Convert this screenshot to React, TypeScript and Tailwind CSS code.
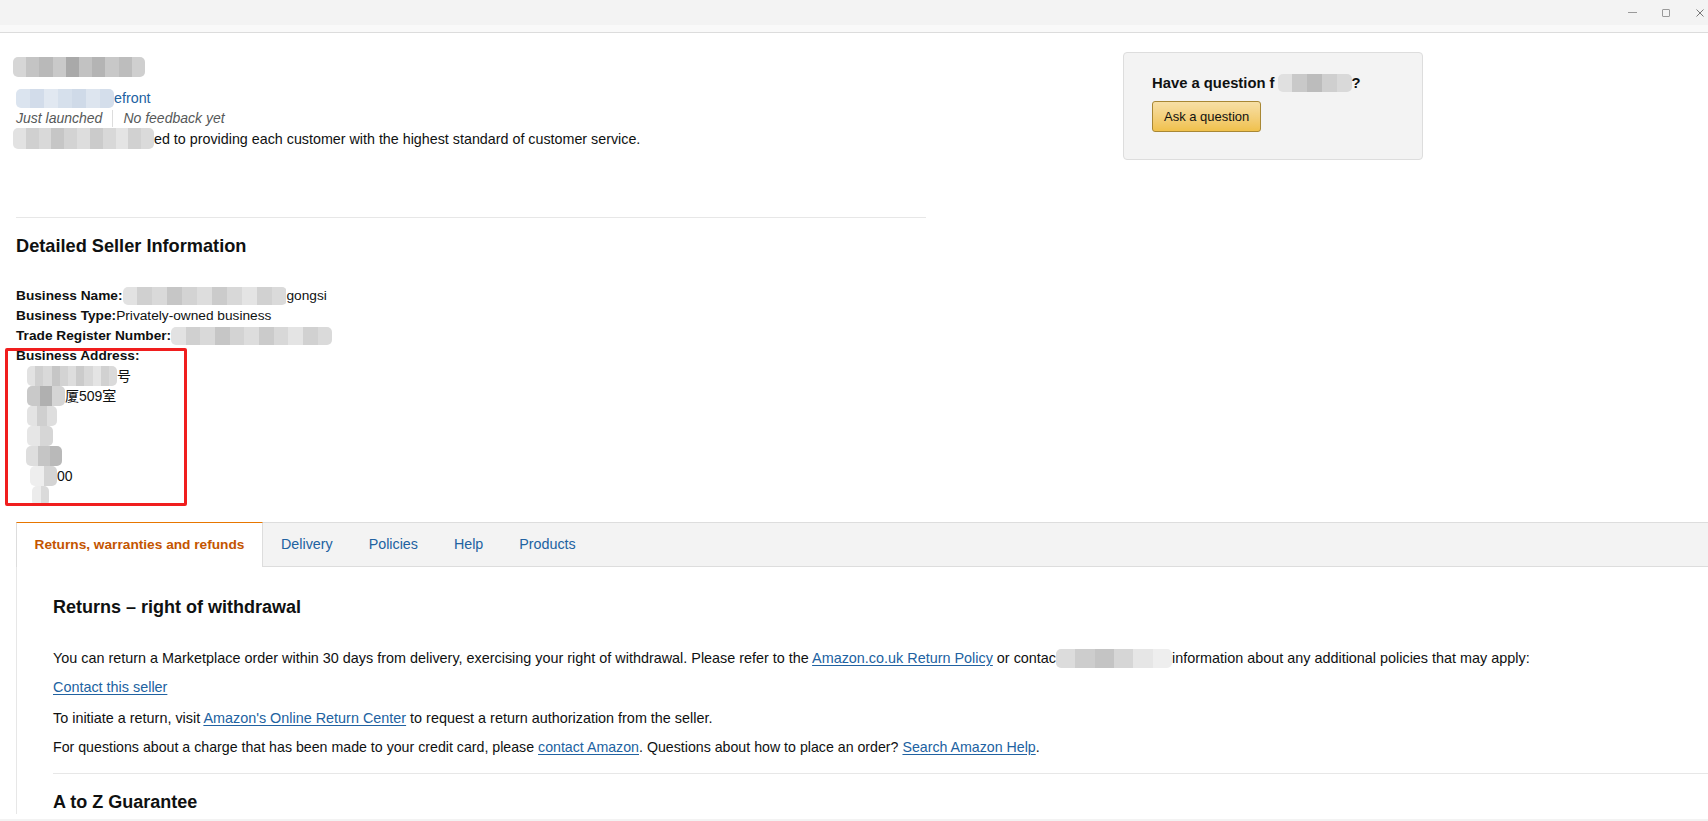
import React from 'react'

// blurred (pixelated) patches used where the screenshot is redacted
function Mosaic({ tones, className = '' }: { tones: string[]; className?: string }) {
  return (
    <span className={`inline-flex shrink-0 overflow-hidden rounded-[5px] blur-[0.6px] align-middle ${className}`}>
      {tones.map((t, i) => (
        <span key={i} className="h-full flex-1" style={{ backgroundColor: t }} />
      ))}
    </span>
  )
}

const grayA = ['#d6d6d6', '#c4c4c4', '#b9b9b9', '#c9c9c9', '#a9a9a9', '#c2c2c2', '#b4b4b4', '#c8c8c8', '#bdbdbd', '#cfcfcf']
const grayB = ['#e2e2e2', '#d0d0d0', '#d9d9d9', '#c6c6c6', '#d3d3d3', '#dddddd', '#cbcbcb', '#d8d8d8', '#e4e4e4', '#d1d1d1', '#dadada']
const blueA = ['#dbe4ef', '#d2dcea', '#e1e8f1', '#d6e0ec', '#cfdae8', '#dde5ef', '#d4deeb']

function WindowControls() {
  return (
    <div className="flex items-center pr-[4px]">
      <span className="w-[9px] h-px bg-[#9a9a9a]" />
      <span className="ml-[25px] w-[8px] h-[8px] border border-[#9a9a9a] rounded-[1px]" />
      <svg className="ml-[26px]" width="8" height="8" viewBox="0 0 8 8">
        <path d="M0.5 0.5 L7.5 7.5 M7.5 0.5 L0.5 7.5" stroke="#777" strokeWidth="1" />
      </svg>
    </div>
  )
}

function A({ children }: { children: React.ReactNode }) {
  return <a className="text-[#2162a1] underline underline-offset-[2px] decoration-[#2162a1]">{children}</a>
}

export default function App() {
  const tabs = ['Delivery', 'Policies', 'Help', 'Products']

  return (
    <div className="h-[821px] w-full overflow-hidden bg-white flex flex-col font-['Liberation_Sans','Noto_Sans_CJK_SC',Arial,sans-serif] text-[#0f1111]">
      {/* window chrome */}
      <div className="h-[25px] shrink-0 bg-[#f3f3f3] flex justify-end items-center">
        <WindowControls />
      </div>
      <div className="h-[8px] shrink-0 bg-[#f9f9f9] border-b border-[#dcdcdc]" />

      <div className="flex-1 overflow-hidden pl-[16px]">
        <div className="flex">
          {/* Left column */}
          <div className="w-[910px] shrink-0">
            <Mosaic tones={grayA} className="mt-[24px] ml-[-3px] w-[132px] h-[20px]" />

            <div className="mt-[11px] flex items-center text-[14.3px] leading-[20px]">
              <Mosaic tones={blueA} className="w-[98px] h-[19px]" />
              <span className="text-[#2162a1]">efront</span>
            </div>

            <div className="flex items-center italic text-[14px] leading-[20px] text-[#565959]">
              Just launched
              <span className="mx-[10px] w-px h-[17px] bg-[#dddddd]" />
              No feedback yet
            </div>

            <div className="flex items-center text-[14.3px] leading-[20px]">
              <Mosaic tones={grayB} className="ml-[-3px] w-[141px] h-[21px]" />
              <span>ed to providing each customer with the highest standard of customer service.</span>
            </div>

            <div className="mt-[68px] h-px bg-[#e7e7e7]" />

            <h2 className="mt-[16px] text-[18.2px] leading-[24px] font-bold">Detailed Seller Information</h2>

            <div className="mt-[28px] text-[13.7px] leading-[20px]">
              <div className="flex items-center">
                <b>Business Name:</b>
                <Mosaic tones={grayB} className="w-[164px] h-[18px]" />
                <span>gongsi</span>
              </div>
              <div>
                <b>Business Type:</b>Privately-owned business
              </div>
              <div className="flex items-center">
                <b>Trade Register Number:</b>
                <Mosaic tones={grayB} className="w-[161px] h-[18px]" />
              </div>

              <div className="relative">
                <b>Business Address:</b>
                <div className="pl-[11px] text-[14px]">
                  <div className="flex items-center h-[20px]">
                    <Mosaic tones={grayB} className="w-[90px] h-[20px]" />
                    <span>号</span>
                  </div>
                  <div className="flex items-center h-[20px]">
                    <Mosaic tones={['#c9c9c9', '#b0b0b0', '#d5d5d5']} className="w-[38px] h-[20px] rounded-[2px]" />
                    <span>厦509室</span>
                  </div>
                  <div className="flex items-center h-[20px]">
                    <Mosaic tones={['#e3e3e3', '#cfcfcf', '#dedede']} className="w-[30px] h-[20px] rounded-[2px]" />
                  </div>
                  <div className="flex items-center h-[20px]">
                    <Mosaic tones={['#e6e6e6', '#d6d6d6']} className="w-[26px] h-[20px] rounded-[2px]" />
                  </div>
                  <div className="flex items-center h-[20px]">
                    <Mosaic tones={['#dedede', '#c5c5c5', '#b9b9b9']} className="ml-[-1px] w-[36px] h-[20px] rounded-[2px]" />
                  </div>
                  <div className="flex items-center h-[20px]">
                    <Mosaic tones={['#eeeeee', '#d4d4d4']} className="ml-[3px] w-[27px] h-[20px] rounded-[2px]" />
                    <span>00</span>
                  </div>
                  <div className="flex items-center h-[20px]">
                    <Mosaic tones={['#ececec', '#dadada']} className="ml-[5px] w-[17px] h-[20px] rounded-[2px]" />
                  </div>
                </div>
                {/* red annotation box */}
                <div className="absolute left-[-11px] top-[2px] bottom-0 w-[182px] border-[3px] border-[#f01e1e] rounded-[2px]" />
              </div>
            </div>
          </div>

          {/* Right: question box */}
          <div className="ml-[197px] mt-[19px] w-[300px] h-[108px] shrink-0 bg-[#f3f3f3] border border-[#dddddd] rounded-[4px] pl-[28px] pt-[20px]">
            <div className="flex items-center text-[14.8px] leading-[20px] font-bold">
              Have a question f
              <Mosaic tones={['#e0e0e0', '#c9c9c9', '#bcbcbc', '#cfcfcf', '#d9d9d9']} className="ml-[3px] w-[74px] h-[18px]" />
              ?
            </div>
            <button className="mt-[8px] h-[31px] px-[11px] text-[13px] text-[#111] rounded-[3px] border border-[#a88734] bg-gradient-to-b from-[#f7dfa5] to-[#f0c14b]">
              Ask a question
            </button>
          </div>
        </div>

        {/* Tabs */}
        <div className="mt-[16px] flex h-[45px]">
          <div className="w-[247px] shrink-0 flex items-center justify-center bg-white border-x border-[#dddddd] border-t border-t-[#e77600] text-[13.7px] font-bold text-[#c45500]">
            Returns, warranties and refunds
          </div>
          {tabs.map((t) => (
            <div key={t} className="flex items-center px-[18px] bg-[#f3f3f3] border-y border-[#dddddd] text-[14.3px] text-[#2162a1]">
              {t}
            </div>
          ))}
          <div className="flex-1 bg-[#f3f3f3] border-y border-[#dddddd]" />
        </div>

        {/* Tab panel */}
        <div className="border-l border-[#e7e7e7] pl-[36px] pt-[28px] text-[14.4px] leading-[20px]">
          <h3 className="text-[18px] leading-[24px] font-bold">Returns – right of withdrawal</h3>

          <p className="mt-[29px] flex items-center whitespace-nowrap">
            <span>
              You can return a Marketplace order within 30 days from delivery, exercising your right of withdrawal. Please
              refer to the <A>Amazon.co.uk Return Policy</A> or contac
            </span>
            <Mosaic tones={['#dcdcdc', '#cdcdcd', '#c4c4c4', '#d6d6d6', '#e6e6e6', '#eeeeee']} className="w-[116px] h-[19px] rounded-[3px]" />
            <span>information about any additional policies that may apply:</span>
          </p>

          <p className="mt-[9px]">
            <A>Contact this seller</A>
          </p>

          <p className="mt-[11px]">
            To initiate a return, visit <A>Amazon's Online Return Center</A> to request a return authorization from the seller.
          </p>

          <p className="mt-[9px] text-[14.2px]">
            For questions about a charge that has been made to your credit card, please <A>contact Amazon</A>. Questions about
            how to place an order? <A>Search Amazon Help</A>.
          </p>

          <div className="mt-[16px] h-px bg-[#e7e7e7]" />

          <h3 className="mt-[16px] text-[18px] leading-[24px] font-bold">A to Z Guarantee</h3>
        </div>
      </div>

      <div className="h-[2px] shrink-0 bg-[#f3f3f3]" />
    </div>
  )
}
